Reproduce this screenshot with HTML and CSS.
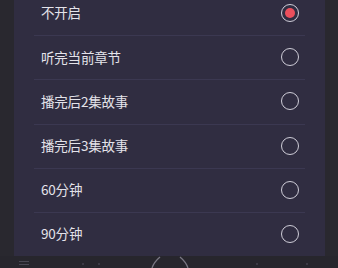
FILE: index.html
```html
<!DOCTYPE html>
<html lang="zh">
<head>
<meta charset="utf-8">
<link rel="stylesheet" href="styles.css">
</head>
<body>
<div class="screen">
  <div class="panel">
    <ul class="list">
      <li class="row"><span class="label">不开启</span><span class="radio checked"></span></li>
      <li class="row"><span class="label">听完当前章节</span><span class="radio"></span></li>
      <li class="row"><span class="label">播完后2集故事</span><span class="radio"></span></li>
      <li class="row"><span class="label">播完后3集故事</span><span class="radio"></span></li>
      <li class="row"><span class="label">60分钟</span><span class="radio"></span></li>
      <li class="row"><span class="label">90分钟</span><span class="radio"></span></li>
    </ul>
  </div>
  <div class="bottombar">
    <span class="menu-icon"><i></i><i></i></span>
    <span class="dot d1"></span>
    <span class="dot d2"></span>
    <svg class="play-arc" width="44" height="12" viewBox="0 0 44 12">
      <path d="M12 1 Q6 6 4 12" fill="none" stroke="#7a7884" stroke-width="1.3"/>
      <path d="M32 1 Q38 6 40 12" fill="none" stroke="#7a7884" stroke-width="1.3"/>
    </svg>
    <span class="dot d3"></span>
    <span class="dot d4"></span>
  </div>
</div>
</body>
</html>
```
FILE: styles.css
```css
* { box-sizing: border-box; }
html, body {
  margin: 0;
  padding: 0;
  background: #29282f;
}
.screen {
  width: 338px;
  height: 268px;
  overflow: hidden;
  display: flex;
  flex-direction: column;
  background: #29282f;
  font-family: "Noto Sans CJK SC", "Noto Sans", sans-serif;
}
.panel {
  height: 256px;
  margin: 0 13px 0 14px;
  background: #302d41;
  overflow: hidden;
  flex: none;
}
.list {
  list-style: none;
  margin: -9px 0 0 0;
  padding: 0;
}
.row {
  position: relative;
  height: 44.2px;
  display: flex;
  align-items: center;
  justify-content: space-between;
  padding: 0 26px 0 27px;
}
.row + .row::before {
  content: "";
  position: absolute;
  top: 0;
  left: 20px;
  right: 20px;
  height: 1px;
  background: #3b3851;
}
.label {
  color: #e4e3ea;
  font-size: 13.5px;
  line-height: 1;
  letter-spacing: -0.2px;
}
.radio {
  width: 18px;
  height: 18px;
  border: 1.5px solid #cfcdd8;
  border-radius: 50%;
  display: flex;
  align-items: center;
  justify-content: center;
}
.radio.checked::after {
  content: "";
  width: 10px;
  height: 10px;
  border-radius: 50%;
  background: #ec4f5c;
}
.bottombar {
  position: relative;
  flex: 1;
  background: #27262d;
}
.menu-icon {
  position: absolute;
  left: 19px;
  top: 5px;
  width: 10px;
  display: flex;
  flex-direction: column;
  gap: 2px;
}
.menu-icon i {
  display: block;
  height: 1px;
  background: #4a4854;
}
.dot {
  position: absolute;
  top: 7px;
  width: 2px;
  height: 2px;
  border-radius: 50%;
  background: #44424e;
}
.d1 { left: 82px; }
.d2 { left: 98px; }
.d3 { left: 306px; }
.d4 { left: 256px; }
.play-arc {
  position: absolute;
  left: 148px;
  top: 0;
}
```
